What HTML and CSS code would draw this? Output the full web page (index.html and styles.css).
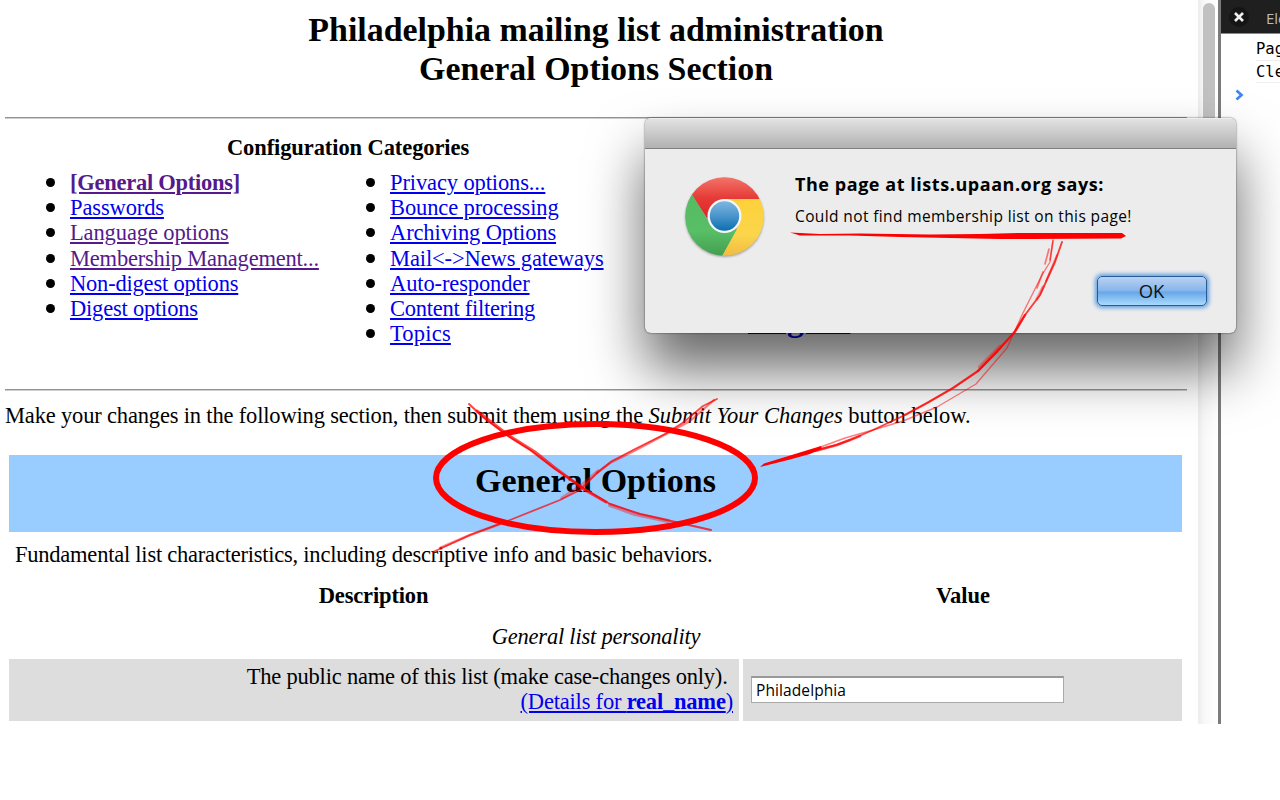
FILE: index.html
```
<!DOCTYPE html>
<html lang="en">
<head>
<meta charset="utf-8">
<title>Philadelphia mailing list administration</title>
<link rel="stylesheet" href="styles.css">
</head>
<body>
<div class="screen">
  <main class="page">
    <h1 class="title">Philadelphia mailing list administration<br>General Options Section</h1>
    <hr class="rule">
    <div class="categories">
      <h2 class="cat-heading">Configuration Categories</h2>
      <div class="cat-columns">
        <ul class="links links-a">
          <li><a class="visited tight" href="#"><b>[General Options]</b></a></li>
          <li><a href="#">Passwords</a></li>
          <li><a class="visited" href="#">Language options</a></li>
          <li><a class="visited snug" href="#">Membership Management...</a></li>
          <li><a class="snug" href="#">Non-digest options</a></li>
          <li><a class="snug" href="#">Digest options</a></li>
        </ul>
        <ul class="links links-b">
          <li><a href="#">Privacy options...</a></li>
          <li><a href="#">Bounce processing</a></li>
          <li><a href="#">Archiving Options</a></li>
          <li><a href="#">Mail&lt;-&gt;News gateways</a></li>
          <li><a href="#">Auto-responder</a></li>
          <li><a class="tight" href="#">Content filtering</a></li>
          <li><a class="wide" href="#">Topics</a></li>
        </ul>
        <a class="logout" href="#">Logout</a>
      </div>
    </div>
    <hr class="rule">
    <p class="intro"><span class="lead">Make your changes in the following section, then submit them using the </span><i>Submit Your Changes</i> button below.</p>
    <h2 class="banner">General Options</h2>
    <p class="summary">Fundamental list characteristics, including descriptive info and basic behaviors.</p>
    <div class="heads"><b>Description</b><b>Value</b></div>
    <div class="subhead"><i>General list personality</i></div>
    <div class="row">
      <div class="desc">The public name of this list (make case-changes only).&nbsp;<br><a href="#">(Details for <b>real_name</b>)</a></div>
      <div class="value"><div class="field">Philadelphia</div></div>
    </div>
  </main>
  <div class="scrollbar"><div class="thumb"></div></div>
  <aside class="devtools">
    <div class="toolbar">
      <svg class="close" width="22" height="22" viewBox="0 0 22 22"><circle cx="11" cy="11" r="10" fill="#151515"/><path d="M7 7l8 8M15 7l-8 8" stroke="#eee" stroke-width="2.600"/></svg>
      <span>Elements</span>
    </div>
    <div class="log">Page</div>
    <div class="log">Cleared</div>
    <svg class="prompt" width="10" height="12" viewBox="0 0 10 12"><path d="M1.500 1.500L6.500 6l-5 4.500" fill="none" stroke="#3f86f4" stroke-width="2.700"/></svg>
  </aside>
</div>

<section class="dialog">
  <div class="dialog-bar"></div>
  <div class="dialog-body">
    <svg class="chrome" width="84" height="86" viewBox="0 0 84 86">
      <defs>
        <linearGradient id="red" x1="0" y1="0" x2="0" y2="1"><stop offset="0" stop-color="#f37d70"/><stop offset=".55" stop-color="#e63a36"/><stop offset="1" stop-color="#dc2629"/></linearGradient>
        <linearGradient id="yellow" x1="0" y1="0" x2="0" y2="1"><stop offset="0" stop-color="#fdd13a"/><stop offset=".6" stop-color="#fbd54b"/><stop offset="1" stop-color="#efb541"/></linearGradient>
        <linearGradient id="green" x1="0" y1="0" x2="0" y2="1"><stop offset="0" stop-color="#55b961"/><stop offset=".65" stop-color="#58bf67"/><stop offset="1" stop-color="#40994b"/></linearGradient>
        <linearGradient id="blue" x1="0" y1="0" x2="0" y2="1"><stop offset="0" stop-color="#80b5df"/><stop offset=".5" stop-color="#4a95cb"/><stop offset="1" stop-color="#0c6faf"/></linearGradient>
        <clipPath id="disc"><circle cx="42.500" cy="42.500" r="39.300"/></clipPath>
        <filter id="soft"><feGaussianBlur stdDeviation="1.300"/></filter>
      </defs>
      <circle cx="42.500" cy="43.800" r="39.300" fill="#555" opacity=".5" filter="url(#soft)"/>
      <g clip-path="url(#disc)">
        <path d="M0 0H84V25H42L25 44L10 21z" fill="url(#red)"/>
        <path d="M42 25H84V86H36L40 82L57 50z" fill="url(#yellow)"/>
        <path d="M0 3L10.500 21L26 47L40 58L55 55L40 82V86H0z" fill="url(#green)"/>
      </g>
      <circle cx="42.500" cy="42" r="17" fill="#f4f6f7"/>
      <circle cx="42.500" cy="42" r="14.700" fill="url(#blue)"/>
    </svg>
    <div class="message">
      <strong>The page at lists.upaan.org says:</strong>
      <p>Could not find membership list on this page!</p>
    </div>
    <button class="ok">OK</button>
  </div>
</section>

<svg class="marks" width="1280" height="800" viewBox="0 0 1280 800">
  <ellipse cx="595.500" cy="478" rx="159.500" ry="54" fill="none" stroke="#f00" stroke-width="6"/>
  <g fill="#f00">
    <path d="M790 232.500L820 234L860 233.500L930 234.500L980 234L1020 233L1122 233L1126 236L1121 238.500L1030 239L1000 239L900 237L850 235.500L800 235.500z"/>
    <path d="M760 467L764 463.500L790 455.500L821 446L822 448.500L810 454L790 459.500z"/>
  </g>
  <g fill="none" stroke="#f00" stroke-linecap="round" stroke-linejoin="round">
    <path d="M810 452L836 445L850 440L873 430L903 416L927 403L953 388L978 371L997 352L1015 331L1025 315L1040 295L1055 262L1062 242" stroke-width="1.900" opacity=".75"/>
    <path d="M978 371L997 351L1015 332L1025 315" stroke-width="2.400" opacity=".7"/>
    <path d="M980 367L1000 347" stroke-width="4.500" opacity=".35"/>
    <path d="M905 415L927 403L953 388L978 371" stroke-width="2.300" opacity=".5"/>
    <path d="M818 448L845 438L873 430L903 421L937 407L976 384L1007 348L1023 313L1042 275L1050 262L1053 240" stroke-width="1.400" opacity=".5"/>
    <path d="M815 451L837 445L860 436" stroke-width="2.600" opacity=".6"/>
    <path d="M1053 241L1050 260M1049 249L1045 264M1043 272L1037 288" stroke-width="1.700" opacity=".5"/>
    <path d="M1037 299L1043 287" stroke-width="3" opacity=".35"/>
    <path d="M1046 281L1057 255" stroke-width="1.800" opacity=".45"/>
    <path d="M469 404L484 418L508 436L530 450L555 469L585 489L610 504L640 514L680 523L711 530" stroke-width="1.900" opacity=".75"/>
    <path d="M477 411L508 435L535 452L555 468L585 490L606 502" stroke-width="3" opacity=".7"/>
    <path d="M610 505L635 514L668 521" stroke-width="4" opacity=".38"/>
    <path d="M717 399L703 406L684 422L665 434L635 449L612 461L598 472L580 490L560 500L510 520L470 535L433 552" stroke-width="1.800" opacity=".7"/>
    <path d="M714 400L690 421L668 433L636 450L610 463L597 473" stroke-width="2.300" opacity=".5"/>
    <path d="M562 498L583 484L598 471" stroke-width="3.200" opacity=".35"/>
    <path d="M500 524L470 535L440 548" stroke-width="2.600" opacity=".45"/>
  </g>
</svg>
</body>
</html>
```
FILE: styles.css
```
* { box-sizing: border-box; }
body { margin: 0; width: 1280px; height: 800px; overflow: hidden; background: #fff; color: #000; font: 22.500px/25.300px "Liberation Serif", serif; position: relative; }
h1, h2, p, ul { margin: 0; padding: 0; }
a { color: #0000ee; text-decoration: underline; }
a.visited { color: #551a8b; }
.screen { display: flex; height: 724px; overflow: hidden; }
.page { width: 1198px; flex: none; padding: 10px 11px 0 5px; }
.title { font-size: 33.900px; line-height: 39px; text-align: center; height: 107px; }
.rule { margin: 0; border: 0; border-top: 1px solid #949494; border-bottom: 1px solid #ccc; height: 2px; }
.categories { height: 270px; padding-top: 16px; }
.cat-heading { width: 686px; font-size: 22.500px; line-height: 25px; text-align: center; letter-spacing: -.09px; }
.cat-columns { display: flex; padding-top: 10px; }
.links { padding-left: 65px; list-style: none; letter-spacing: -.12px; }
.links .snug { letter-spacing: -.2px; }
.links .tight { letter-spacing: -.26px; }
.links .wide { letter-spacing: .2px; }
.links-a { width: 320px; }
.links-b { width: 358px; }
.links li { height: 25.200px; white-space: nowrap; display: flex; }
.links li::before { content: ""; width: 9px; height: 9px; border-radius: 50%; background: #000; margin: 8px 15px 0 -24px; flex: none; }
.logout { font-weight: bold; font-size: 33.500px; margin: 137px 0 0 65px; text-decoration-thickness: 2px; }
.intro { padding-top: 12px; height: 64px; white-space: nowrap; }
.lead { letter-spacing: -.17px; }
.banner { margin: 0 5px 0 4px; height: 77px; background: #9cf; font-size: 34px; line-height: 52px; text-align: center; }
.summary { padding: 10px 0 0 10px; white-space: nowrap; letter-spacing: -.23px; }
.heads { display: flex; padding-top: 16px; text-align: center; }
.heads b:first-child { width: 737px; letter-spacing: -.15px; }
.heads b:last-child { width: 442px; }
.subhead { padding-top: 15px; height: 50px; text-align: center; letter-spacing: -.22px; }
.row { display: flex; gap: 4px; margin: 0 5px 0 4px; height: 62px; }
.desc { width: 730px; background: #ddd; padding: 5px 6px 0 0; text-align: right; letter-spacing: -.2px; }
.value { flex: 1; background: #ddd; padding: 17px 0 0 8px; }
.field { width: 313px; height: 27px; background: #fff; border: 1px solid #aaa; border-top: 2px solid #999; padding-left: 4px; font: 15.500px/24px "Open Sans", sans-serif; letter-spacing: .1px; }
.scrollbar { width: 20px; background: linear-gradient(90deg, #ececec, #f8f8f8 30%, #fff); padding: 3px 3px 0 5px; }
.thumb { height: 230px; width: 12px; border-radius: 6px; background: #c1c1c1; }
.devtools { width: 62px; border-left: 3px solid #7b7b7b; overflow: hidden; flex: none; }
.toolbar { height: 34px; background: #1f1f1f; border-bottom: 1px solid #888; display: flex; gap: 16px; padding: 6px 0 0 7px; color: #bbb; font: 15px/24px "Open Sans", sans-serif; }
.close { flex: none; }
.log { font: 15.500px/22px "DejaVu Sans Mono", monospace; margin-left: 35px; height: 22.500px; border-bottom: 1px solid #eee; white-space: nowrap; }
.log:nth-child(2) { margin-top: 4px; }
.prompt { display: block; margin: 6px 0 0 14px; }
.dialog { position: absolute; left: 645px; top: 118px; width: 591px; height: 215px; background: #ececec; border-radius: 6px; box-shadow: 0 0 2px rgba(0,0,0,.7), 0 36px 56px rgba(0,0,0,.6); overflow: hidden; }
.dialog-bar { height: 31px; border-top: 1px solid #eee; border-bottom: 1px solid #808080; background: linear-gradient(#e2e2e2, #b1b1b1); }
.dialog-body { display: flex; position: relative; padding: 25px 0 0 37px; }
.chrome { flex: none; }
.message { padding: 0 0 0 29px; font-family: "Open Sans", sans-serif; white-space: nowrap; }
.message strong { display: block; font-size: 18px; line-height: 20px; letter-spacing: .55px; }
.message p { font-size: 15.500px; line-height: 20px; margin-top: 12px; letter-spacing: .38px; }
.ok { position: absolute; left: 452px; top: 127px; width: 110px; height: 30px; padding: 0 1px 1px 0; border: 1px solid #285a9b; border-radius: 5px; background: linear-gradient(#b9d2f1, #87b6ec 48%, #67a7e8 54%, #a9dafc); box-shadow: 0 0 4px 2px #5f9fdf; font: 18.500px/24px "Open Sans", sans-serif; color: #111; }
.marks { position: absolute; left: 0; top: 0; pointer-events: none; }
```
